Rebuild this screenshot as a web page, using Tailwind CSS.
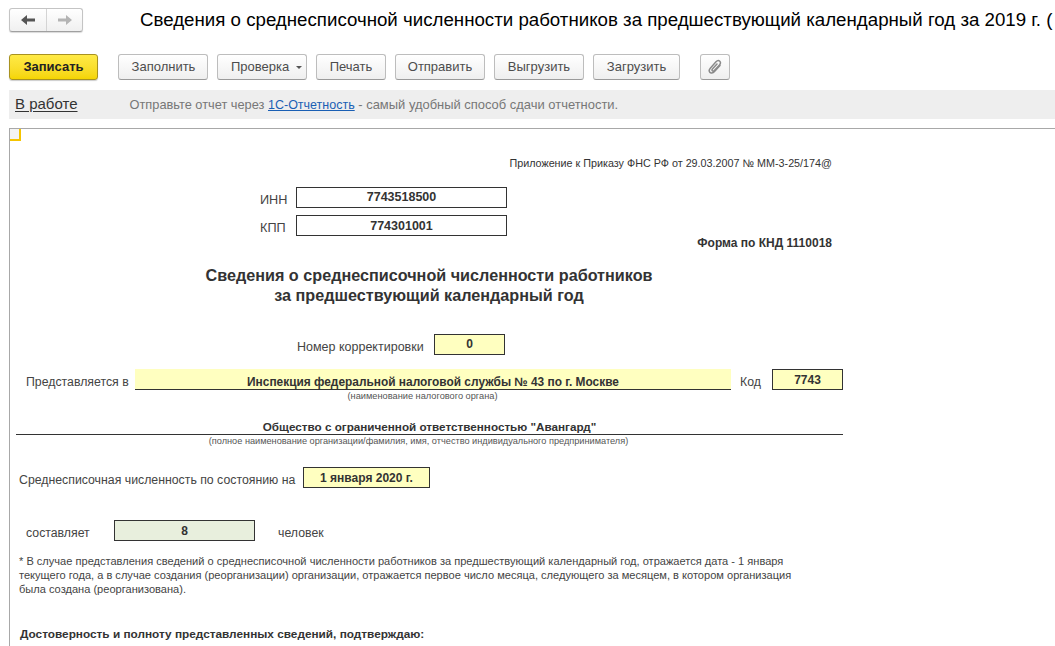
<!DOCTYPE html>
<html lang="ru">
<head>
    <meta charset="UTF-8">
    <title>Сведения о среднесписочной численности</title>
    <script src="https://cdn.jsdelivr.net/npm/@tailwindcss/browser@4"></script>
</head>
<body class="bg-white w-[1055px] h-[646px] overflow-hidden font-['Liberation_Sans',Arial,sans-serif] text-[#333]">
    <!-- Заголовок -->
    <div class="flex items-center h-[24px] mt-[8px] pl-[9px] whitespace-nowrap">
        <div class="flex w-[74px] h-[24px] rounded-[3px] border border-[#c4c4c4] border-b-[#a0a0a0] bg-gradient-to-b from-white to-[#f0f0f0] shadow-[0_1px_1px_rgba(0,0,0,0.15)]">
            <div class="flex items-center justify-center w-[37px] border-r border-[#d4d4d4]">
                <svg width="16" height="12" viewBox="0 0 16 12"><path d="M1 6 L7 1 V4.5 H15 V7.5 H7 V11 Z" fill="#555"/></svg>
            </div>
            <div class="flex items-center justify-center flex-1">
                <svg width="16" height="12" viewBox="0 0 16 12"><path d="M15 6 L9 1 V4.5 H1 V7.5 H9 V11 Z" fill="#b4b4b4"/></svg>
            </div>
        </div>
        <h1 class="ml-[57px] text-[18.7px] leading-[24px] text-black font-normal">Сведения о среднесписочной численности работников за предшествующий календарный год за 2019 г. (</h1>
    </div>

    <!-- Кнопки -->
    <div class="flex items-center h-[26px] mt-[22px] pl-[9px] text-[13px] text-[#4d4d4d] whitespace-nowrap">
        <button class="w-[89px] h-[26px] rounded-[3px] border border-[#a89220] bg-gradient-to-b from-[#ffea45] to-[#f5d500] font-bold text-[#222] shadow-[0_1px_1px_rgba(0,0,0,0.2)]">Записать</button>
        <button class="ml-[20px] w-[90px] h-[26px] rounded-[3px] border border-[#bdbdbd] border-b-[#9a9a9a] bg-gradient-to-b from-white to-[#efefef] pl-[1px]">Заполнить</button>
        <button class="ml-[9px] w-[90px] h-[26px] rounded-[3px] border border-[#bdbdbd] border-b-[#9a9a9a] bg-gradient-to-b from-white to-[#efefef] flex items-center pl-[13px]">Проверка<span class="ml-[7px] w-0 h-0 border-x-[3px] border-x-transparent border-t-[3px] border-t-[#555]"></span></button>
        <button class="ml-[9px] w-[70px] h-[26px] rounded-[3px] border border-[#bdbdbd] border-b-[#9a9a9a] bg-gradient-to-b from-white to-[#efefef]">Печать</button>
        <button class="ml-[9px] w-[90px] h-[26px] rounded-[3px] border border-[#bdbdbd] border-b-[#9a9a9a] bg-gradient-to-b from-white to-[#efefef]">Отправить</button>
        <button class="ml-[9px] w-[90px] h-[26px] rounded-[3px] border border-[#bdbdbd] border-b-[#9a9a9a] bg-gradient-to-b from-white to-[#efefef]">Выгрузить</button>
        <button class="ml-[9px] w-[87px] h-[26px] rounded-[3px] border border-[#bdbdbd] border-b-[#9a9a9a] bg-gradient-to-b from-white to-[#efefef]">Загрузить</button>
        <button class="ml-[20px] w-[30px] h-[26px] rounded-[3px] border border-[#bdbdbd] border-b-[#9a9a9a] bg-gradient-to-b from-white to-[#efefef] flex items-center justify-center">
            <svg width="14" height="16" viewBox="0 0 14 16" fill="none" stroke="#8a8a8a" stroke-width="1.5" stroke-linecap="round"><path d="M12 6.5 L6.5 12.5 C4.8 14.3 2.6 14.3 1.8 13.3 C0.9 12.2 1.1 10.4 2.5 8.9 L8 2.8 C9.2 1.5 10.8 1.3 11.8 2.2 C12.8 3.1 12.7 4.6 11.5 5.9 L6.3 11.5 C5.6 12.2 4.8 12.3 4.3 11.8 C3.8 11.3 3.9 10.5 4.6 9.8 L9 5"/></svg>
        </button>
    </div>

    <!-- Статус -->
    <div class="flex items-center h-[29px] mt-[10px] ml-[9px] pl-[6px] bg-[#eeeeee] whitespace-nowrap">
        <span class="text-[15px] text-[#333] underline underline-offset-2">В работе</span>
        <span class="ml-[52px] text-[12.8px] text-[#777]">Отправьте отчет через <span class="text-[12.5px] text-[#1a5fb4] underline">1С-Отчетность</span><span class="text-[12.95px]"> - самый удобный способ сдачи отчетности.</span></span>
    </div>

    <!-- Форма -->
    <div class="relative mt-[9px] ml-[9px] h-[518px] border-l border-t border-[#a8a8a8] whitespace-nowrap text-[12px]">
        <div class="absolute left-0 top-0 w-[11px] h-[12px] border-r-2 border-b-2 border-[#f5c400] bg-[#f4f4f4]"></div>

        <div class="w-[822px] h-[14px] mt-[27px] text-right text-[10.77px] leading-[14px]">Приложение к Приказу ФНС РФ от 29.03.2007 № ММ-3-25/174@</div>

        <div class="flex items-center h-[21px] mt-[17px] pl-[250px]">
            <span class="w-[36px] text-[12.7px] text-[#444] mt-[7px]">ИНН</span>
            <div class="w-[211px] h-[21px] border border-[#333] font-bold text-[12.5px] text-center leading-[19px]">7743518500</div>
        </div>
        <div class="flex items-center h-[21px] mt-[7px] pl-[250px]">
            <span class="w-[36px] text-[12.7px] text-[#444] mt-[7px]">КПП</span>
            <div class="w-[211px] h-[21px] border border-[#333] font-bold text-[12.5px] text-center leading-[21px]">774301001</div>
        </div>
        <div class="w-[822px] h-[14px] text-right font-bold leading-[14px]">Форма по КНД 1110018</div>

        <h2 class="w-[838px] h-[40px] mt-[15px] text-center text-[16.2px] leading-[20px] font-bold">Сведения о среднесписочной численности работников<br>за предшествующий календарный год</h2>

        <div class="flex items-center h-[21px] mt-[29px] pl-[287px]">
            <span class="w-[137px] text-[12.5px] text-[#444] mt-[5px]">Номер корректировки</span>
            <div class="w-[71px] h-[21px] border border-[#333] bg-[#ffffc0] font-bold text-center leading-[19px]">0</div>
        </div>

        <div class="flex items-center h-[21px] mt-[14px] pl-[16px]">
            <span class="w-[109px] text-[12.3px] text-[#444] mt-[5px]">Представляется в</span>
            <div class="w-[596px] h-[21px] border-b border-[#333] bg-[#ffffc0] font-bold text-[11.9px] text-center leading-[26px]">Инспекция федеральной налоговой службы № 43 по г. Москве</div>
            <span class="ml-[9px] w-[32px] text-[12.3px] text-[#444] mt-[5px]">Код</span>
            <div class="w-[71px] h-[21px] border border-[#333] bg-[#ffffc0] font-bold text-center leading-[21px]">7743</div>
        </div>
        <div class="w-[825px] h-[12px] text-center text-[9.24px] leading-[12px] text-[#555]">(наименование налогового органа)</div>

        <div class="w-[827px] h-[15px] mt-[18px] ml-[6px] border-b border-[#333] text-center font-bold text-[11.7px] leading-[14px]">Общество с ограниченной ответственностью "Авангард"</div>
        <div class="w-[815px] h-[12px] text-center text-[9.2px] leading-[12px] ml-[1px] text-[#555]">(полное наименование организации/фамилия, имя, отчество индивидуального предпринимателя)</div>

        <div class="flex items-center h-[21px] mt-[20px] pl-[9px]">
            <span class="w-[284px] text-[12.3px] text-[#444] mt-[5px]">Среднесписочная численность по состоянию на</span>
            <div class="w-[127px] h-[21px] border border-[#333] bg-[#ffffc0] font-bold text-center leading-[21px]">1 января 2020 г.</div>
        </div>

        <div class="flex items-center h-[21px] mt-[32px] pl-[16px]">
            <span class="w-[88px] text-[12.3px] text-[#444] mt-[5px]">составляет</span>
            <div class="w-[141px] h-[21px] border border-[#333] bg-[#e8efdd] font-bold text-center leading-[21px]">8</div>
            <span class="ml-[23px] text-[12.3px] text-[#444] mt-[5px]">человек</span>
        </div>

        <p class="h-[42px] mt-[13px] pl-[9px] text-[11.07px] leading-[14px] text-[#444]">* В случае представления сведений о среднесписочной численности работников за предшествующий календарный год, отражается дата - 1 января<br>текущего года, а в случае создания (реорганизации) организации, отражается первое число месяца, следующего за месяцем, в котором организация<br>была создана (реорганизована).</p>

        <div class="h-[14px] mt-[31px] pl-[10px] font-bold text-[11.8px] leading-[14px]">Достоверность и полноту представленных сведений, подтверждаю:</div>
    </div>
</body>
</html>
